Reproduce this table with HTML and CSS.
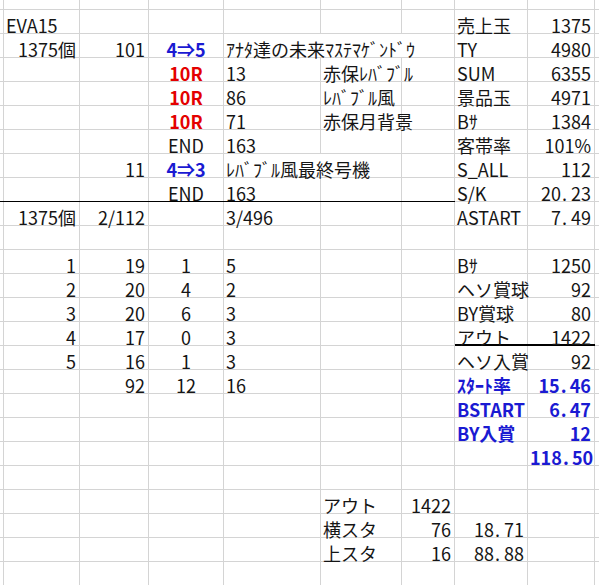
FILE: index.html
```html
<!DOCTYPE html>
<html lang="ja">
<head>
<meta charset="utf-8">
<title>EVA15</title>
<link rel="stylesheet" href="styles.css">
</head>
<body>
<div class="sheet">
  <div class="row top"></div>
  <div class="row"><div></div><div>EVA15</div><div></div><div></div><div></div><div></div><div></div><div>売上玉</div><div class="r">1375</div></div>
  <div class="row"><div></div><div class="r">1375個</div><div class="r">101</div><div class="c b blue">4⇒5</div><div class="span3">ｱﾅﾀ達の未来ﾏｽﾃﾏｹﾞﾝﾄﾞｳ</div><div>TY</div><div class="r">4980</div></div>
  <div class="row"><div></div><div></div><div></div><div class="c b red">10R</div><div>13</div><div>赤保ﾚﾊﾞﾌﾞﾙ</div><div></div><div>SUM</div><div class="r">6355</div></div>
  <div class="row"><div></div><div></div><div></div><div class="c b red">10R</div><div>86</div><div>ﾚﾊﾞﾌﾞﾙ風</div><div></div><div>景品玉</div><div class="r">4971</div></div>
  <div class="row"><div></div><div></div><div></div><div class="c b red">10R</div><div>71</div><div>赤保月背景</div><div></div><div>Bｻ</div><div class="r">1384</div></div>
  <div class="row"><div></div><div></div><div></div><div class="c">END</div><div>163</div><div></div><div></div><div>客帯率</div><div class="r">101%</div></div>
  <div class="row"><div></div><div></div><div class="r">11</div><div class="c b blue">4⇒3</div><div class="span2">ﾚﾊﾞﾌﾞﾙ風最終号機</div><div></div><div>S_ALL</div><div class="r">112</div></div>
  <div class="row rule-left"><div></div><div></div><div></div><div class="c">END</div><div>163</div><div></div><div></div><div>S/K</div><div class="r">20<span class="pt">.</span>23</div></div>
  <div class="row"><div></div><div class="r">1375個</div><div class="r">2/112</div><div></div><div>3/496</div><div></div><div></div><div>ASTART</div><div class="r">7<span class="pt">.</span>49</div></div>
  <div class="row"></div>
  <div class="row"><div></div><div class="r">1</div><div class="r">19</div><div class="c">1</div><div>5</div><div></div><div></div><div>Bｻ</div><div class="r">1250</div></div>
  <div class="row"><div></div><div class="r">2</div><div class="r">20</div><div class="c">4</div><div>2</div><div></div><div></div><div>ヘソ賞球</div><div class="r">92</div></div>
  <div class="row"><div></div><div class="r">3</div><div class="r">20</div><div class="c">6</div><div>3</div><div></div><div></div><div>BY賞球</div><div class="r">80</div></div>
  <div class="row rule-right"><div></div><div class="r">4</div><div class="r">17</div><div class="c">0</div><div>3</div><div></div><div></div><div>アウト</div><div class="r">1422</div></div>
  <div class="row"><div></div><div class="r">5</div><div class="r">16</div><div class="c">1</div><div>3</div><div></div><div></div><div>ヘソ入賞</div><div class="r">92</div></div>
  <div class="row"><div></div><div></div><div class="r">92</div><div class="c">12</div><div>16</div><div></div><div></div><div class="b blue">ｽﾀｰﾄ率</div><div class="r b blue">15<span class="pt">.</span>46</div></div>
  <div class="row"><div></div><div></div><div></div><div></div><div></div><div></div><div></div><div class="b blue">BSTART</div><div class="r b blue">6<span class="pt">.</span>47</div></div>
  <div class="row"><div></div><div></div><div></div><div></div><div></div><div></div><div></div><div class="b blue">BY入賞</div><div class="r b blue">12</div></div>
  <div class="row"><div></div><div></div><div></div><div></div><div></div><div></div><div></div><div></div><div class="r b blue">118<span class="pt">.</span>50</div></div>
  <div class="row"></div>
  <div class="row"><div></div><div></div><div></div><div></div><div></div><div>アウト</div><div class="r">1422</div></div>
  <div class="row"><div></div><div></div><div></div><div></div><div></div><div>横スタ</div><div class="r">76</div><div class="r">18<span class="pt">.</span>71</div></div>
  <div class="row"><div></div><div></div><div></div><div></div><div></div><div>上スタ</div><div class="r">16</div><div class="r">88<span class="pt">.</span>88</div></div>
  <div class="row"></div>
</div>
</body>
</html>
```

FILE: styles.css
```css
html, body {
  margin: 0;
  padding: 0;
  background: #fff;
}

.sheet {
  width: 599px;
  height: 585px;
  overflow: hidden;
  font-family: "Liberation Sans Narrow", "Noto Sans CJK JP", sans-serif;
  font-size: 18px;
  color: #151515;
  background-color: #fff;
  background-image:
    linear-gradient(#d4d4d4, #d4d4d4),
    linear-gradient(#d4d4d4, #d4d4d4),
    linear-gradient(#d4d4d4, #d4d4d4),
    linear-gradient(#d4d4d4, #d4d4d4),
    linear-gradient(#d4d4d4, #d4d4d4),
    linear-gradient(#d4d4d4, #d4d4d4),
    linear-gradient(#d4d4d4, #d4d4d4),
    linear-gradient(#d4d4d4, #d4d4d4),
    linear-gradient(#d4d4d4, #d4d4d4),
    linear-gradient(to bottom, #d4d4d4 1px, transparent 1px);
  background-size:
    1px 100%, 1px 100%, 1px 100%, 1px 100%, 1px 100%,
    1px 100%, 1px 100%, 1px 100%, 1px 100%,
    100% 24px;
  background-position:
    3px 0, 79px 0, 148px 0, 223px 0, 320px 0,
    401px 0, 454px 0, 527px 0, 594px 0,
    0 9px;
  background-repeat:
    no-repeat, no-repeat, no-repeat, no-repeat, no-repeat,
    no-repeat, no-repeat, no-repeat, no-repeat,
    repeat-y;
}

.row {
  display: grid;
  grid-template-columns: 4px 76px 69px 75px 97px 81px 53px 73px 67px 1fr;
  height: 24px;
}

.row.top {
  height: 10px;
}

.row > div {
  box-sizing: border-box;
  height: 24px;
  padding: 7px 3px 1px 2px;
  line-height: 16px;
  white-space: nowrap;
  min-width: 0;
}

.row > .r {
  text-align: right;
  padding-right: 4px;
}

.row > .c {
  text-align: center;
  padding-left: 0;
  padding-right: 1px;
}

.row > .span3,
.row > .span2 {
  background: #fff;
  height: 23px;
  margin: 0 1px 1px 0;
  padding-bottom: 0;
}

.span3 { grid-column: span 3; }
.span2 { grid-column: span 2; }

.b { font-weight: 700; }
.blue { color: #1a1ad2; }
.red { color: #e40000; }

.pt {
  display: inline-block;
  width: 9px;
  padding-left: 1px;
  text-align: left;
}

.rule-left {
  background: linear-gradient(#000, #000) no-repeat 0 100% / 455px 1px;
}

.rule-right {
  background: linear-gradient(#000, #000) no-repeat 455px 100% / 140px 2px;
}
```
